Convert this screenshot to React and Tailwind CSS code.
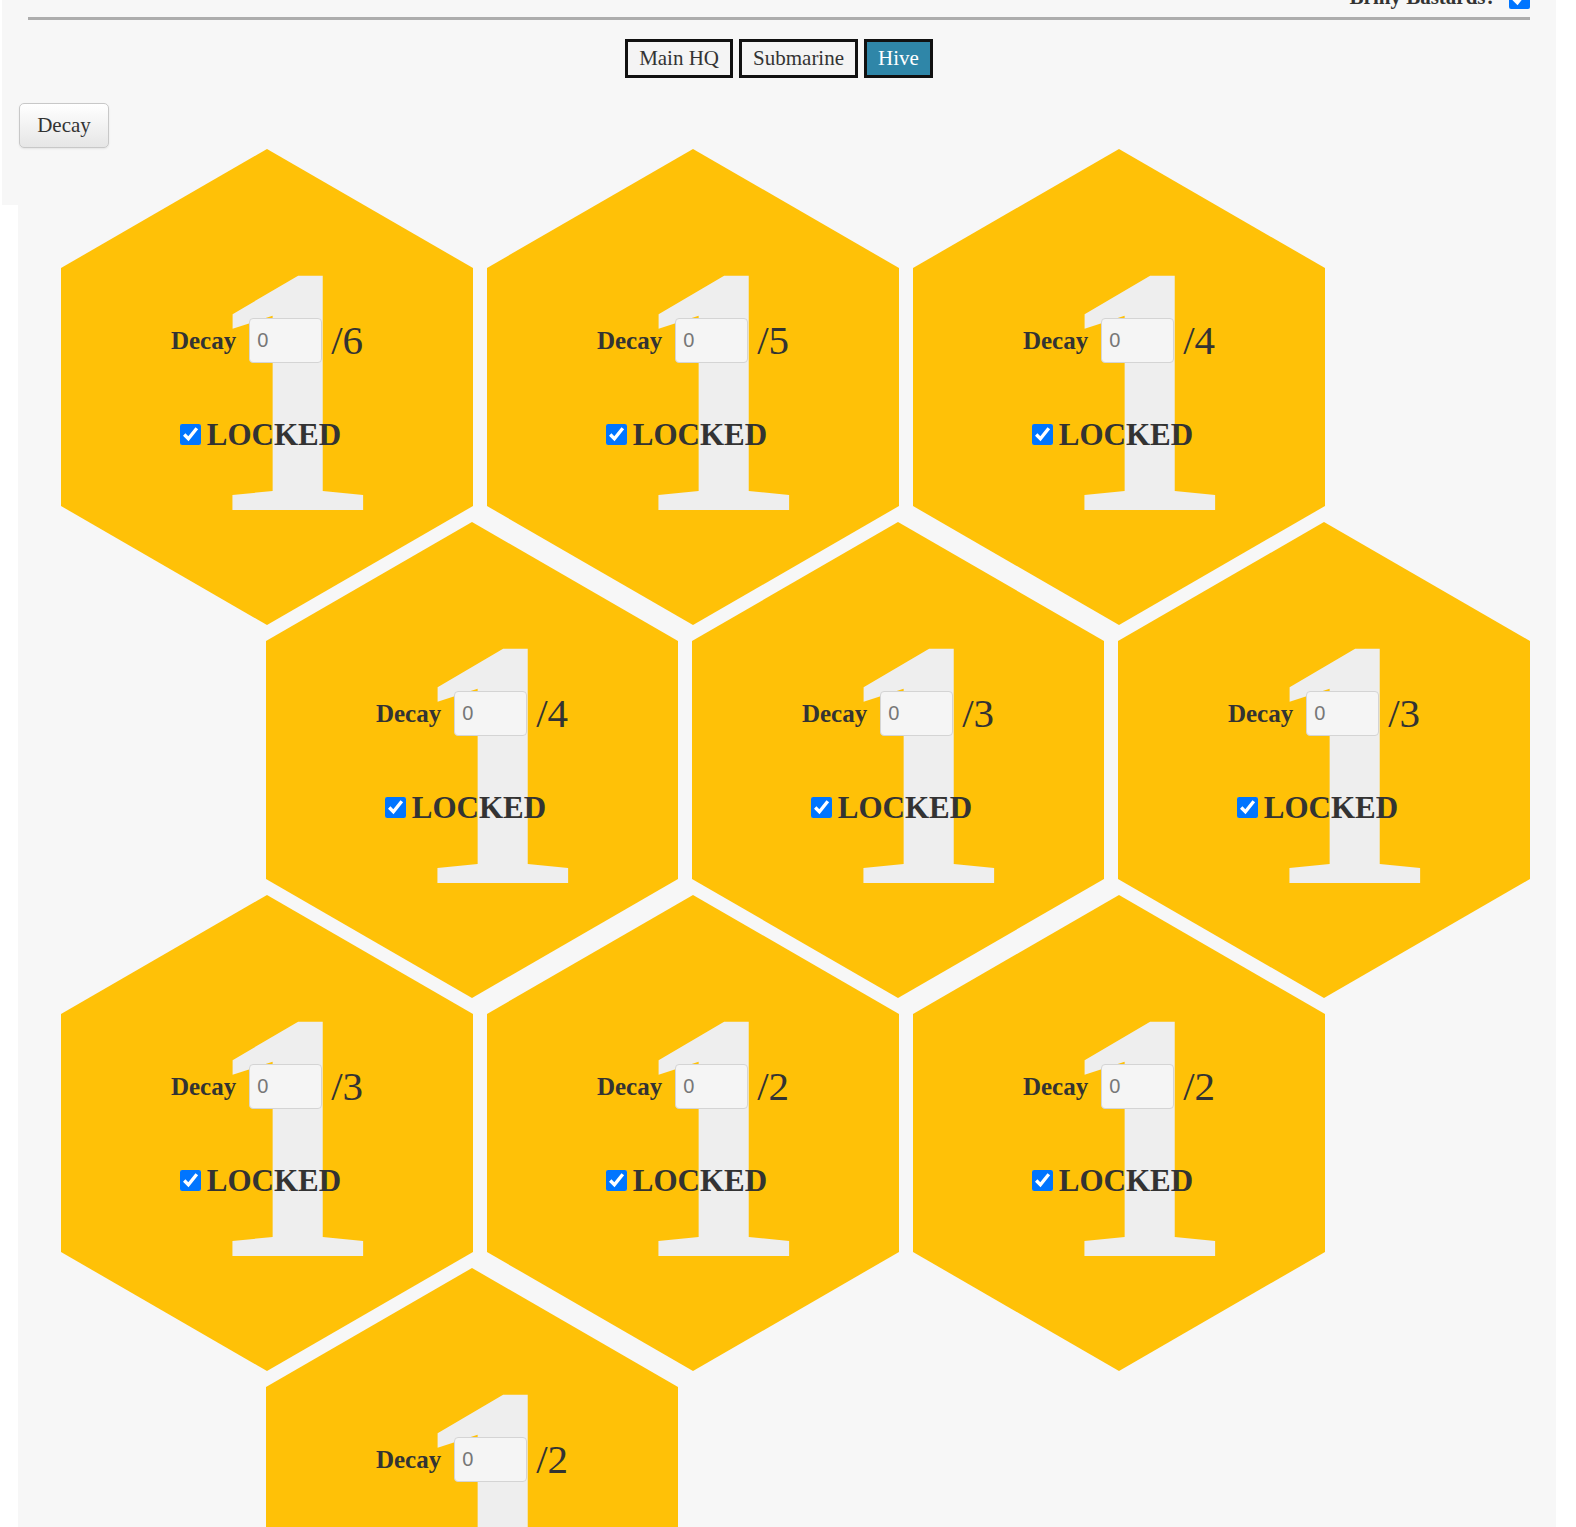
import React from 'react';

const serif = "font-['Liberation_Serif','Times_New_Roman',serif]";

const rows = [
  { pad: 'pl-[43px]', cells: [6, 5, 4] },
  { pad: 'pl-[248px]', cells: [4, 3, 3] },
  { pad: 'pl-[43px]', cells: [3, 2, 2] },
  { pad: 'pl-[248px]', cells: [2] },
];

function NavButton({ label, active }) {
  return (
    <button
      className={`h-[39px] px-[11px] border-[3px] border-[#111] text-[21px] leading-none ${serif} ${
        active ? 'bg-[#2f86a8] text-white' : 'bg-[#f4f4f4] text-[#333]'
      }`}
    >
      {label}
    </button>
  );
}

function Hex({ max }) {
  return (
    <div className="relative w-[412px] h-[476px] shrink-0 bg-[#ffc107] [clip-path:polygon(50%_0,100%_25%,100%_75%,50%_100%,0_75%,0_25%)]">
      {/* big background numeral */}
      <span
        className={`absolute left-[143px] top-[64px] text-[355px] leading-none font-bold text-[#eeeeee] select-none ${serif}`}
      >
        1
      </span>
      <div className="relative h-full flex flex-col items-center justify-center gap-[53px] pb-[4px]">
        <div className="h-[45px] flex items-center">
          <span className={`text-[25px] font-bold text-[#333] ${serif}`}>Decay</span>
          <input
            type="text"
            defaultValue="0"
            className="ml-[13px] w-[73px] h-[45px] px-[7px] bg-[#f5f5f5] border border-[#d4d4d4] rounded-[4px] text-[20px] text-[#777] font-['Liberation_Sans',Arial,sans-serif] outline-none"
          />
          <span className={`ml-[9px] text-[41px] leading-none text-[#333] ${serif}`}>/{max}</span>
        </div>
        <label className="h-[36px] flex items-center pr-[13px]">
          <input type="checkbox" defaultChecked className="w-[21px] h-[21px] m-0" />
          <span className={`ml-[6px] text-[31px] leading-none font-bold text-[#333] ${serif}`}>LOCKED</span>
        </label>
      </div>
    </div>
  );
}

export default function App() {
  return (
    <div className="min-h-screen bg-white overflow-hidden">
      {/* header */}
      <div className="ml-[2px] w-[1554px] h-[205px] bg-[#f7f7f7] flex flex-col">
        <div className="px-[26px]">
          <div className="-mt-[17px] h-[30px] flex items-center justify-end">
            <span className={`text-[21px] font-bold text-[#333] ${serif}`}>Briny Bastards?</span>
            <input type="checkbox" defaultChecked className="ml-[13px] w-[21px] h-[21px] m-0" />
          </div>
          <div className="mt-[4px] border-t-[3px] border-[#adadad]" />
        </div>
        <div className="mt-[19px] flex justify-center gap-[6px]">
          <NavButton label="Main HQ" />
          <NavButton label="Submarine" />
          <NavButton label="Hive" active />
        </div>
        <div className="mt-[25px] pl-[17px]">
          <button
            className={`w-[90px] h-[45px] rounded-[5px] border border-[#c8c8c8] bg-gradient-to-b from-white to-[#e6e6e6] shadow-[0_1px_2px_rgba(0,0,0,0.08)] text-[21px] text-[#333] ${serif}`}
          >
            Decay
          </button>
        </div>
      </div>

      {/* hive */}
      <div className="ml-[18px] w-[1538px] bg-[#f7f7f7] flex flex-col pb-[40px]">
        {rows.map((row, i) => (
          <div key={i} className={`flex gap-[14px] ${row.pad} ${i === 0 ? '-mt-[56px]' : '-mt-[103px]'}`}>
            {row.cells.map((max, j) => (
              <Hex key={j} max={max} />
            ))}
          </div>
        ))}
      </div>
    </div>
  );
}
